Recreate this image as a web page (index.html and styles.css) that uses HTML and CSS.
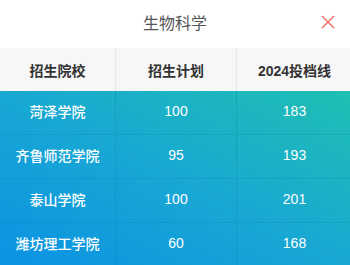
FILE: index.html
```html
<!DOCTYPE html>
<html lang="zh">
<head>
<meta charset="utf-8">
<link rel="stylesheet" href="styles.css">
</head>
<body>
<div class="panel">
  <div class="title-bar">
    <span class="title">生物科学</span>
    <span class="close" aria-label="关闭">
      <svg width="14" height="14" viewBox="0 0 14 14"><path d="M1 1L13 13M13 1L1 13" stroke="#f2655f" stroke-width="1.4" fill="none"/></svg>
    </span>
  </div>
  <table class="grid">
    <thead>
      <tr><th class="c1">招生院校</th><th class="c2">招生计划</th><th class="c3">2024投档线</th></tr>
    </thead>
    <tbody>
      <tr><td class="name">菏泽学院</td><td>100</td><td>183</td></tr>
      <tr><td class="name">齐鲁师范学院</td><td>95</td><td>193</td></tr>
      <tr><td class="name">泰山学院</td><td>100</td><td>201</td></tr>
      <tr><td class="name">潍坊理工学院</td><td>60</td><td>168</td></tr>
    </tbody>
  </table>
</div>
</body>
</html>
```
FILE: styles.css
```css
html, body {
  margin: 0;
  padding: 0;
  background: #fff;
}
body {
  font-family: "Noto Sans CJK SC", "Liberation Sans", sans-serif;
  width: 350px;
  height: 265px;
  overflow: hidden;
}
.panel {
  width: 350px;
}
.title-bar {
  height: 48px;
  display: flex;
  align-items: center;
  justify-content: center;
  position: relative;
}
.title {
  font-size: 16px;
  color: #555;
  margin-top: -4px;
}
.close {
  position: absolute;
  right: 15px;
  top: 15px;
  width: 14px;
  height: 14px;
  display: flex;
}
.grid {
  width: 350px;
  border-collapse: collapse;
  table-layout: fixed;
}
.grid th {
  height: 43px;
  padding: 0;
  background: #f7f7f7;
  font-size: 14px;
  font-weight: bold;
  color: #333;
  font-family: "Liberation Sans", "Noto Sans CJK SC", sans-serif;
  border-right: 1px solid #e6e6e6;
}
.grid th:last-child { border-right: none; }
.c1 { width: 115px; }
.c2 { width: 120px; }
.c3 { width: 115px; }
.grid tbody {
  background: linear-gradient(to top right, #0b92e3 0%, #18a8d3 50%, #20bfb2 100%);
}
.grid td {
  height: 40px;
  padding: 0 0 3px;
  text-align: center;
  color: #fff;
  font-size: 14px;
  line-height: 16px;
  font-family: "Liberation Sans", "Noto Sans CJK SC", sans-serif;
  border-right: 1px solid rgba(0, 60, 110, 0.12);
  border-top: 1px solid rgba(0, 60, 110, 0.1);
}
.grid tbody tr:first-child td { border-top: none; }
.grid td:last-child { border-right: none; }
.grid td.name {
  font-weight: 500;
  font-family: "Noto Sans CJK SC", sans-serif;
}
```
